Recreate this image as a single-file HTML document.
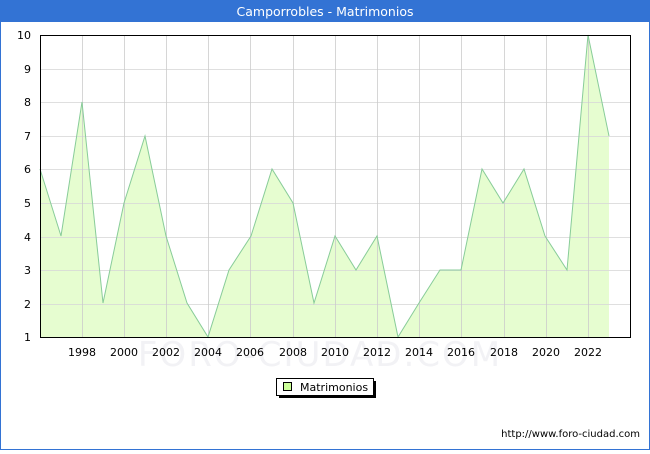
<!DOCTYPE html>
<html><head><style>
body{margin:0;width:650px;height:450px;overflow:hidden;font-family:"DejaVu Sans","Liberation Sans",sans-serif;}
</style></head><body>
<svg width="650" height="450" xmlns="http://www.w3.org/2000/svg" font-family="DejaVu Sans, Liberation Sans, sans-serif">
<rect x="0" y="0" width="650" height="450" fill="#fff" stroke="#3373d4" stroke-width="2"/>
<rect x="0" y="0" width="650" height="22" fill="#3373d4"/>
<text x="325" y="16" fill="#fff" font-size="12.5" text-anchor="middle">Camporrobles - Matrimonios</text>
<text x="320" y="366" font-size="34" fill="#f2f2f5" text-anchor="middle" letter-spacing="2">FORO-CIUDAD.COM</text>
<polygon fill="#e6fdd0" stroke="none" points="40,337 40,169 61,236 82,102 103,303 124,203 145,136 166,236 187,303 208,337 229,270 251,236 272,169 293,203 314,303 335,236 356,270 377,236 398,337 419,303 440,270 461,270 482,169 503,203 524,169 545,236 567,270 588,35 609,136 609,337"/>
<g stroke="#d8d8d8" stroke-width="1" opacity="0.8">
<line x1="40" x2="630" y1="69.5" y2="69.5"/><line x1="40" x2="630" y1="102.5" y2="102.5"/><line x1="40" x2="630" y1="136.5" y2="136.5"/><line x1="40" x2="630" y1="169.5" y2="169.5"/><line x1="40" x2="630" y1="203.5" y2="203.5"/><line x1="40" x2="630" y1="237.5" y2="237.5"/><line x1="40" x2="630" y1="270.5" y2="270.5"/><line x1="40" x2="630" y1="304.5" y2="304.5"/>
</g>
<g stroke="#cccccc" stroke-width="1" opacity="0.8">
<line x1="82.5" x2="82.5" y1="35" y2="337"/><line x1="124.5" x2="124.5" y1="35" y2="337"/><line x1="166.5" x2="166.5" y1="35" y2="337"/><line x1="208.5" x2="208.5" y1="35" y2="337"/><line x1="250.5" x2="250.5" y1="35" y2="337"/><line x1="293.5" x2="293.5" y1="35" y2="337"/><line x1="335.5" x2="335.5" y1="35" y2="337"/><line x1="377.5" x2="377.5" y1="35" y2="337"/><line x1="419.5" x2="419.5" y1="35" y2="337"/><line x1="461.5" x2="461.5" y1="35" y2="337"/><line x1="504.5" x2="504.5" y1="35" y2="337"/><line x1="546.5" x2="546.5" y1="35" y2="337"/><line x1="588.5" x2="588.5" y1="35" y2="337"/>
</g>
<polyline fill="none" stroke="#88cc99" stroke-width="1" points="40,169 61,236 82,102 103,303 124,203 145,136 166,236 187,303 208,337 229,270 251,236 272,169 293,203 314,303 335,236 356,270 377,236 398,337 419,303 440,270 461,270 482,169 503,203 524,169 545,236 567,270 588,35 609,136"/>
<rect x="40.5" y="35.5" width="590" height="302" fill="none" stroke="#000" stroke-width="1"/>
<g font-size="11" fill="#000" text-anchor="end">
<text x="31" y="39">10</text><text x="31" y="73">9</text><text x="31" y="106">8</text><text x="31" y="140">7</text><text x="31" y="173">6</text><text x="31" y="207">5</text><text x="31" y="241">4</text><text x="31" y="274">3</text><text x="31" y="308">2</text><text x="31" y="341">1</text>
</g>
<g font-size="11" fill="#000" text-anchor="middle">
<text x="82" y="356">1998</text><text x="124" y="356">2000</text><text x="166" y="356">2002</text><text x="208" y="356">2004</text><text x="250" y="356">2006</text><text x="293" y="356">2008</text><text x="335" y="356">2010</text><text x="377" y="356">2012</text><text x="419" y="356">2014</text><text x="461" y="356">2016</text><text x="504" y="356">2018</text><text x="546" y="356">2020</text><text x="588" y="356">2022</text>
</g>
<rect x="279" y="381" width="97" height="17" fill="#000"/>
<rect x="276.5" y="378.5" width="97" height="17" fill="#fff" stroke="#000"/>
<rect x="283.5" y="382.5" width="8" height="8" fill="#ccff99" stroke="#000"/>
<text x="300" y="391" font-size="11">Matrimonios</text>
<text x="640" y="437" font-size="10" text-anchor="end">http://www.foro-ciudad.com</text>
</svg>
</body></html>
